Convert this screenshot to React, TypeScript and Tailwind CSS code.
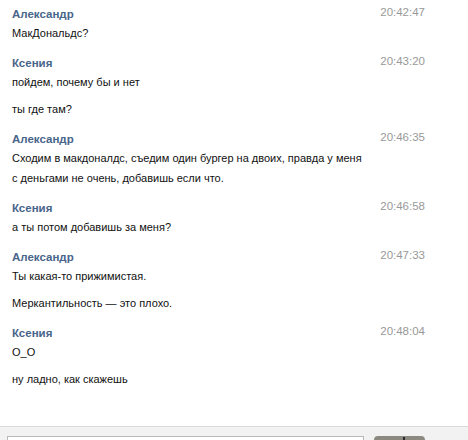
import React from "react";

type Group = { name: string; time: string; msgs: string[][] };

const groups: Group[] = [
  { name: "Александр", time: "20:42:47", msgs: [["МакДональдс?"]] },
  { name: "Ксения", time: "20:43:20", msgs: [["пойдем, почему бы и нет"], ["ты где там?"]] },
  {
    name: "Александр",
    time: "20:46:35",
    msgs: [[
      "Сходим в макдоналдс, съедим один бургер на двоих, правда у меня",
      "с деньгами не очень, добавишь если что.",
    ]],
  },
  { name: "Ксения", time: "20:46:58", msgs: [["а ты потом добавишь за меня?"]] },
  { name: "Александр", time: "20:47:33", msgs: [["Ты какая-то прижимистая."], ["Меркантильность — это плохо."]] },
  { name: "Ксения", time: "20:48:04", msgs: [["О_О"], ["ну ладно, как скажешь"]] },
];

export default function App() {
  return (
    <div
      className="w-[468px] h-[440px] bg-white overflow-hidden flex flex-col text-[11px] text-[#111]"
      style={{ fontFamily: '"Liberation Sans", Arial, sans-serif' }}
    >
      <div className="flex-1 flex flex-col gap-[11px] pt-[5px] pl-[12px] pr-[43px]">
        {groups.map((g, i) => (
          <div key={i} className="flex flex-col">
            <div className="flex justify-between items-start h-[18px] leading-[18px]">
              <span className="font-bold text-[#48658a] text-[11.5px]">{g.name}</span>
              <span className="text-[#999] -mt-[2px] text-[11.5px]">{g.time}</span>
            </div>
            <div className="flex flex-col gap-[7px]">
              {g.msgs.map((m, j) => (
                <div key={j} className="leading-[20px]">
                  {m.map((l, k) => (
                    <div key={k}>{l}</div>
                  ))}
                </div>
              ))}
            </div>
          </div>
        ))}
      </div>
      <div className="h-[14px] shrink-0 border-t border-[#dadada] bg-[#f2f2f2] flex items-start pt-[9px] pl-[7px] gap-[10px]">
        <div className="w-[357px] h-[20px] bg-white border border-[#b9b9b9]" />
        <div className="w-[51px] h-[20px] rounded-[4px] bg-[#8c8a80] relative">
          <div className="absolute left-[29px] top-[1px] w-[2px] h-[18px] bg-[#2a2a2a]" />
        </div>
      </div>
    </div>
  );
}
